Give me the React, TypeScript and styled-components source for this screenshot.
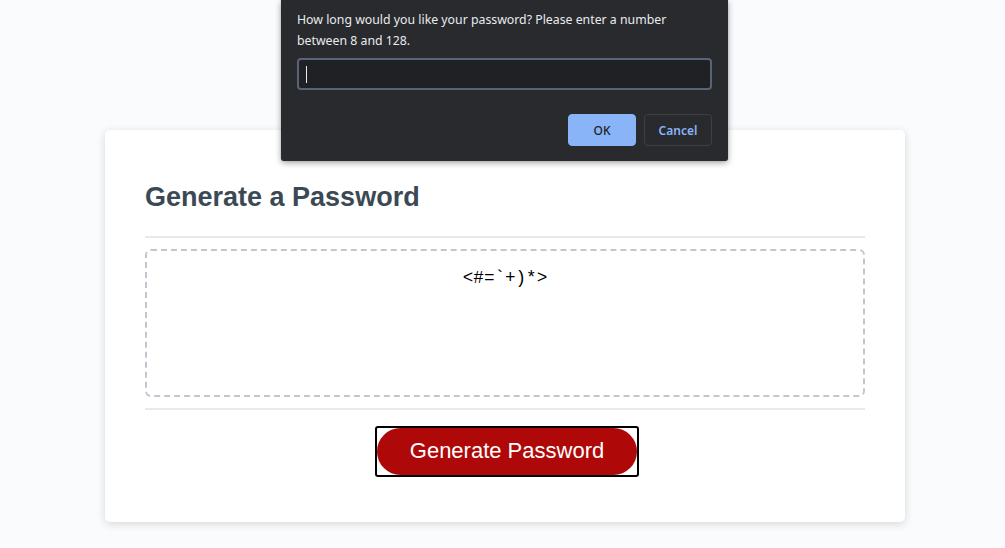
import React from "react";
import styled, { createGlobalStyle } from "styled-components";

const Global = createGlobalStyle`
  *, *::before, *::after { box-sizing: border-box; }
  html, body { margin: 0; padding: 0; }
  body {
    font-family: "Liberation Sans", Arial, sans-serif;
    background-color: #f9fbfd;
    width: 1005px;
    height: 548px;
    overflow: hidden;
  }
`;

const Page = styled.div`
  position: relative;
  height: 548px;
  padding: 130px 20px 0 25px;
`;

const Card = styled.main`
  background: #fff;
  border-radius: 5px;
  box-shadow: rgba(0, 0, 0, 0.15) 0 2px 8px 0;
  color: #3b4954;
  font-size: 18px;
  margin: 0 auto;
  max-width: 800px;
  padding: 30px 40px;
`;

const Divider = styled.div`
  height: 2px;
  width: 100%;
  background: #e7e9eb;
`;

const Title = styled.h2`
  margin: 22.4px 0;
  font-size: 27px;
  line-height: 31px;
  font-weight: 700;
`;

const Output = styled.textarea`
  appearance: none;
  display: block;
  width: 100%;
  height: 148px;
  padding: 16px 15px 85px;
  margin: 11px 0;
  font-family: "Liberation Mono", "DejaVu Sans Mono", monospace;
  font-size: 17.6px;
  line-height: 22px;
  color: #000;
  text-align: center;
  border: 2px dashed #c0c7cf;
  border-radius: 6px;
  resize: none;
  overflow: hidden;
  background: #fff;
  outline: none;
`;

const Footer = styled.div`
  text-align: center;
`;

const FocusRing = styled.span`
  display: inline-block;
  margin: 16px 14px 15px 18px;
  border: 2px solid #000;
  border-radius: 3px;
  line-height: 0;
  vertical-align: top;
`;

const GenerateButton = styled.button`
  border: none;
  background-color: #af0808;
  border-radius: 25px;
  color: #fff;
  font-family: "Liberation Sans", Arial, sans-serif;
  font-size: 22px;
  line-height: 22px;
  height: 47px;
  padding: 12px 33px;
  margin: 0;
  cursor: pointer;
  outline: none;
`;

const Dialog = styled.div`
  position: absolute;
  top: 0;
  left: 281px;
  width: 447px;
  height: 161px;
  background: #292a2d;
  border-radius: 0 0 3px 3px;
  box-shadow: 0 2px 6px rgba(0, 0, 0, 0.35), 0 0 1px rgba(0, 0, 0, 0.4);
  padding: 9px 16px 15px;
  display: flex;
  flex-direction: column;
  font-family: "Noto Sans", "Open Sans", sans-serif;
  color: #e8eaed;
`;

const Message = styled.p`
  margin: 0;
  font-size: 12.3px;
  line-height: 21px;
`;

const PromptInput = styled.div`
  margin-top: 7px;
  height: 32px;
  background: #202124;
  border: 2px solid #5a6478;
  border-radius: 4px;
  display: flex;
  align-items: center;
  padding-left: 7px;
`;

const Caret = styled.span`
  display: block;
  width: 1px;
  height: 17px;
  background: #e8eaed;
`;

const Actions = styled.div`
  margin-top: auto;
  display: flex;
  justify-content: flex-end;
  gap: 8px;
`;

const DialogButton = styled.button<{ $primary?: boolean }>`
  width: 68px;
  height: 32px;
  border-radius: 4px;
  font-family: "Noto Sans", "Open Sans", sans-serif;
  font-size: 12px;
  font-weight: ${(p) => (p.$primary ? 500 : 600)};
  background: ${(p) => (p.$primary ? "#8ab4f8" : "#292a2d")};
  color: ${(p) => (p.$primary ? "#202124" : "#8ab4f8")};
  border: 1px solid ${(p) => (p.$primary ? "#8ab4f8" : "#3c4043")};
  padding: 0;
  cursor: pointer;
`;

export default function App() {
  return (
    <>
      <Global />
      <Page>
        <Card>
          <header>
            <Title>Generate a Password</Title>
            <Divider />
          </header>
          <section>
            <Output readOnly value="<#=`+)*>" aria-label="Generated Password" />
          </section>
          <Footer>
            <Divider />
            <FocusRing>
              <GenerateButton>Generate Password</GenerateButton>
            </FocusRing>
          </Footer>
        </Card>
        <Dialog role="dialog">
          <Message>
            How long would you like your password? Please enter a number
            <br />
            between 8 and 128.
          </Message>
          <PromptInput>
            <Caret />
          </PromptInput>
          <Actions>
            <DialogButton $primary>OK</DialogButton>
            <DialogButton>Cancel</DialogButton>
          </Actions>
        </Dialog>
      </Page>
    </>
  );
}
